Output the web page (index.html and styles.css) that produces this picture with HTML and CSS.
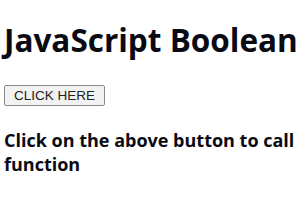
FILE: index.html
```html
<!DOCTYPE html>
<html lang="en">
  <head>
    <meta charset="UTF-8" />
    <link rel="stylesheet" href="styles.css">
    <title>JavaScript Boolean</title>
  </head>
  <body>
    <h1 class="title">JavaScript Boolean</h1>
    <button class="click-btn">CLICK HERE</button>
    <p class="note">Click on the above button to call function</p>
  </body>
</html>
```

FILE: styles.css
```css
body {
  margin: 0;
  padding: 0 3px 0 4px;
  font-family: "Open Sans", sans-serif;
  color: #0a0a14;
  background: #fff;
}

.title {
  font-size: 31.5px;
  font-weight: 700;
  margin: 22px 0 27px;
  line-height: 36px;
  white-space: nowrap;
}

.click-btn {
  display: block;
  font-family: "Liberation Sans", Arial, sans-serif;
  font-size: 13.5px;
  line-height: 15px;
  color: #222;
  padding: 2px 9px;
  background: #f2f2f2;
  border: 1px solid #8a8a8a;
  border-radius: 2px;
}

.note {
  font-size: 18px;
  font-weight: 700;
  line-height: 24px;
  margin: 22px 0 0;
}
```
